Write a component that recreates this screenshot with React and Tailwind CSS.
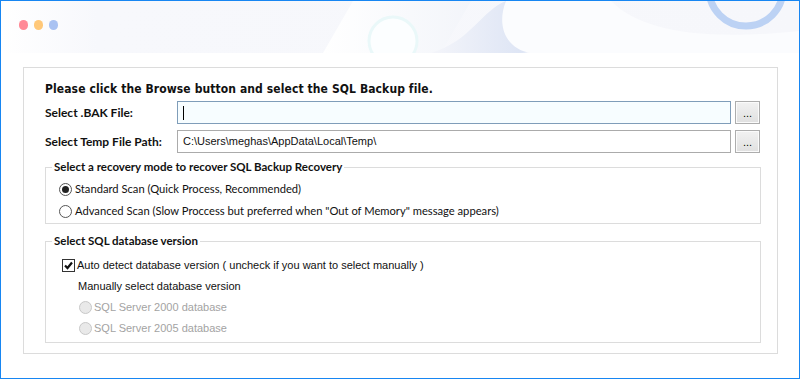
const ui = { fontFamily: 'Lato, "Noto Sans", sans-serif' };
const xp = { fontFamily: '"Liberation Sans", Arial, sans-serif' };
const bold = { fontFamily: '"DejaVu Sans Condensed", "DejaVu Sans", sans-serif' };

function HeaderArt() {
  return (
    <svg width="798" height="52" viewBox="0 0 798 52" className="absolute inset-0">
      <defs>
        <linearGradient id="fadeL" x1="0" x2="1" y1="0" y2="0">
          <stop offset="0" stopColor="#ffffff" />
          <stop offset="0.12" stopColor="#f7f8fc" />
          <stop offset="1" stopColor="#f6f7fb" />
        </linearGradient>
        <linearGradient id="wave" x1="0" x2="1" y1="0" y2="0">
          <stop offset="0" stopColor="#f4f5fa" />
          <stop offset="0.6" stopColor="#dbe3f4" />
          <stop offset="1" stopColor="#cfd9f0" />
        </linearGradient>
        <linearGradient id="band" x1="0" x2="1" y1="0" y2="0">
          <stop offset="0" stopColor="#ffffff" />
          <stop offset="1" stopColor="#f3f5fa" />
        </linearGradient>
      </defs>
      <rect x="0" y="0" width="798" height="52" fill="url(#fadeL)" />
      <polygon points="352,0 470,0 440,52 322,52" fill="url(#band)" />
      <circle cx="392" cy="40" r="24" fill="#fcfeff" stroke="#eaf8f9" strokeWidth="3" />
      <path d="M430,52 C470,40 480,10 505,0 L600,0 C560,30 540,52 520,52 Z" fill="url(#wave)" />
      <path d="M505,0 C495,25 505,48 530,52 L798,52 L798,30 C700,40 640,30 610,0 Z" fill="#fbfcfe" />
      <circle cx="745" cy="-12" r="37" fill="none" stroke="#bcd2f4" strokeWidth="7" />
    </svg>
  );
}

function Radio({ checked, disabled }) {
  return (
    <span
      className={`relative inline-flex w-[13px] h-[13px] rounded-full border shrink-0 items-center justify-center ${
        disabled ? 'border-[#c8c8c8] bg-[#e9e9e9]' : 'border-[#555] bg-white'
      }`}
    >
      {checked && <span className="w-[7px] h-[7px] rounded-full bg-[#222]" />}
    </span>
  );
}

function BrowseButton() {
  return (
    <button className="w-[25px] h-[23px] border border-[#adadad] bg-gradient-to-b from-[#f2f2f2] to-[#e0e0e0] shadow-[inset_0_0_0_1px_#fbfbfb] flex items-end justify-center pb-[4px] text-[11px] leading-none text-black" style={xp}>
      ...
    </button>
  );
}

export default function App() {
  return (
    <div className="w-[800px] h-[379px] border border-[#1786f2] bg-white overflow-hidden text-[#111]">
      {/* Title bar */}
      <div className="relative h-[52px]">
        <HeaderArt />
        <div className="relative flex items-center gap-[6px] pl-[18px] pt-[19px]">
          <span className="w-[9px] h-[10px] rounded-full bg-[#ff8a97]" />
          <span className="w-[9px] h-[10px] rounded-full bg-[#ffc879]" />
          <span className="w-[9px] h-[10px] rounded-full bg-[#a9c2f2]" />
        </div>
      </div>

      {/* Main panel */}
      <div className="ml-[22px] mt-[14px] w-[755px] h-[287px] border border-[#dcdcdc] pl-[21px] pr-[16px]">
        <div className="pt-[12px] h-[33px] text-[12px] font-bold tracking-[0.1px]" style={bold}>
          Please click the Browse button and select the SQL Backup file.
        </div>

        <div className="flex items-center h-[23px]">
          <div className="w-[132px] text-[12px] font-bold" style={ui}>Select .BAK File:</div>
          <div className="w-[554px] h-[23px] border border-[#7f9db9] bg-[#f7fdff] flex items-center pl-[5px]">
            <span className="w-px h-[14px] bg-black" />
          </div>
          <div className="ml-[4px]"><BrowseButton /></div>
        </div>

        <div className="flex items-center h-[23px] mt-[6px]">
          <div className="w-[132px] text-[12px] font-bold" style={ui}>Select Temp File Path:</div>
          <div className="w-[554px] h-[23px] border border-[#ababab] bg-white flex items-center pl-[5px] text-[11px]" style={xp}>
            C:\Users\meghas\AppData\Local\Temp\
          </div>
          <div className="ml-[4px]"><BrowseButton /></div>
        </div>

        <fieldset className="mt-[6px] w-[716px] h-[65px] border border-[#dcdcdc]" style={ui}>
          <legend className="ml-[6px] px-[2px] text-[11.5px] font-bold leading-[16px]">
            Select a recovery mode to recover SQL Backup Recovery
          </legend>
          <div className="pl-[13px] pt-[3px] text-[11.2px]">
            <label className="flex items-center gap-[3px] h-[22px]">
              <Radio checked />
              Standard Scan (Quick Process, Recommended)
            </label>
            <label className="flex items-center gap-[3px] h-[22px]">
              <Radio />
              Advanced Scan (Slow Proccess but preferred when "Out of Memory" message appears)
            </label>
          </div>
        </fieldset>

        <fieldset className="mt-[9px] w-[716px] h-[110px] border border-[#dcdcdc]">
          <legend className="ml-[6px] px-[2px] text-[11.5px] font-bold leading-[16px]" style={ui}>
            Select SQL database version
          </legend>
          <div className="pl-[16px] pt-[6px] text-[11px]" style={xp}>
            <label className="flex items-center gap-[2px] h-[21px]">
              <span className="w-[13px] h-[13px] border border-[#333] bg-white flex items-center justify-center">
                <svg width="9" height="9" viewBox="0 0 9 9">
                  <path d="M1 4.5 L3.5 7 L8 1.5" fill="none" stroke="#111" strokeWidth="2.2" />
                </svg>
              </span>
              Auto detect database version ( uncheck if you want to select manually )
            </label>
            <div className="h-[21px] flex items-center pl-[16px]">Manually select database version</div>
            <label className="flex items-center gap-[2px] h-[21px] pl-[17px] text-[#a3a3a3]">
              <Radio disabled />
              SQL Server 2000 database
            </label>
            <label className="flex items-center gap-[2px] h-[21px] pl-[17px] text-[#a3a3a3]">
              <Radio disabled />
              SQL Server 2005 database
            </label>
          </div>
        </fieldset>
      </div>
    </div>
  );
}
